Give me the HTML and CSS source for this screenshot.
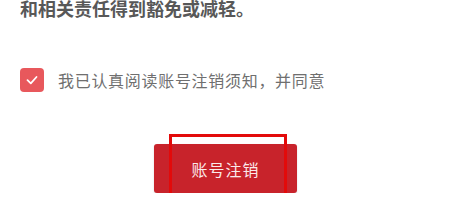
FILE: index.html
```html
<!DOCTYPE html>
<html lang="zh-CN">
<head>
    <meta charset="UTF-8">
    <meta name="viewport" content="width=device-width, initial-scale=1.0">
    <title>账号注销</title>
    <link rel="stylesheet" href="styles.css">
</head>
<body>

    <div class="page">
        <!-- tail of the notice text -->
        <p class="notice">和相关责任得到豁免或减轻。</p>

        <!-- agreement checkbox -->
        <label class="agree">
            <span class="check-box">
                <svg width="14" height="14" viewBox="0 0 14 14">
                    <polyline points="2.5,7.2 5.8,10.3 11.5,4" fill="none" stroke="#fff" stroke-width="1.8" stroke-linecap="round" stroke-linejoin="round"/>
                </svg>
            </span>
            <span class="agree-text">我已认真阅读账号注销须知，并同意</span>
        </label>

        <div class="actions">
            <button class="cancel-btn">账号注销</button>
            <!-- highlight frame -->
            <div class="highlight"></div>
        </div>
    </div>

</body>
</html>
```

FILE: styles.css
```css
/* Page base */
body {
    margin: 0;
    background-color: #ffffff;
    font-family: "Noto Sans CJK SC", "Noto Sans", sans-serif;
}

.page {
    padding: 0 20px;
}

/* Notice text */
.notice {
    margin: -3px 0 0 0;
    font-size: 18px;
    line-height: 23px;
    font-weight: bold;
    color: #585858;
}

/* Agreement row */
.agree {
    display: flex;
    align-items: center;
    gap: 14px;
    margin-top: 48px;
}

.check-box {
    width: 24px;
    height: 24px;
    border-radius: 4px;
    background-color: #e8585c;
    display: flex;
    justify-content: center;
    align-items: center;
}

.agree-text {
    font-size: 16px;
    color: #6f6f6f;
    letter-spacing: 0.7px;
}

/* Button area */
.actions {
    position: relative;
    width: 143px;
    margin: 52px auto 0 auto;
    padding-right: 2px;
}

.cancel-btn {
    width: 143px;
    height: 49px;
    border: none;
    border-radius: 3px;
    background-color: #c8232b;
    color: #fbe9ea;
    font-family: "Noto Sans CJK SC", sans-serif;
    font-size: 16px;
    letter-spacing: 1px;
    box-shadow: 0 1px 2px rgba(0, 0, 0, 0.15);
}

.highlight {
    position: absolute;
    left: 15px;
    top: -10px;
    width: 112px;
    height: 62px;
    border: 3px solid #e30a0a;
}
```
